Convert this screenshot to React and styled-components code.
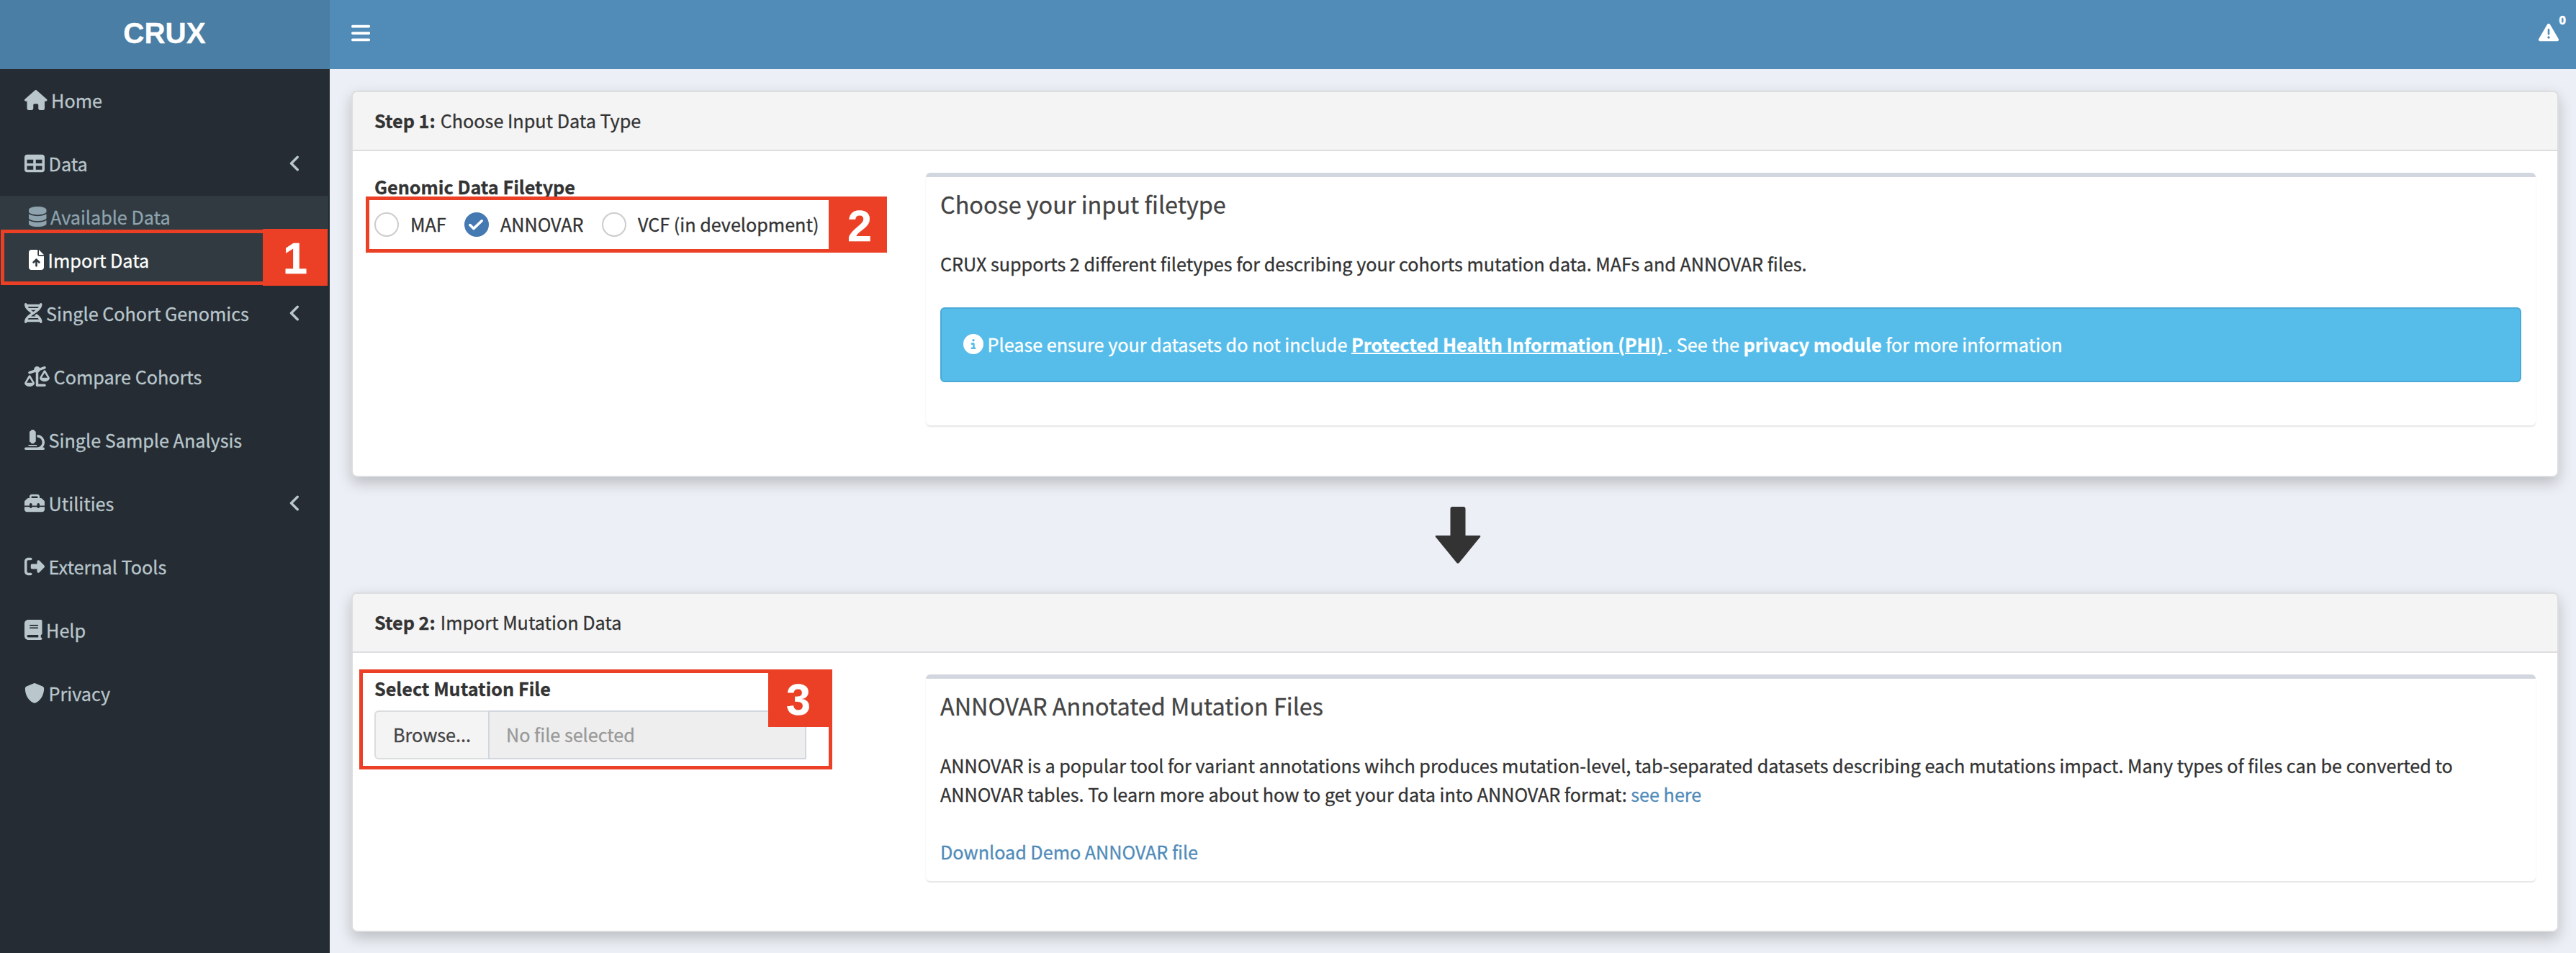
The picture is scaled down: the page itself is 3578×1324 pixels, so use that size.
import React from "react";
import styled, { createGlobalStyle, css } from "styled-components";
import {
  FaHouse,
  FaTable,
  FaDatabase,
  FaFileArrowUp,
  FaDna,
  FaScaleUnbalanced,
  FaMicroscope,
  FaToolbox,
  FaRightFromBracket,
  FaBook,
  FaShield,
  FaAngleLeft,
  FaBars,
  FaTriangleExclamation,
  FaCircleInfo,
} from "react-icons/fa6";

const GlobalStyle = createGlobalStyle`
  *, *::before, *::after { box-sizing: border-box; }
  body {
    margin: 0;
    background: #eceff5;
    font-family: "Noto Sans CJK JP", "Noto Sans CJK SC", "Open Sans", sans-serif;
    font-size: 25.2px;
    line-height: 40px;
    letter-spacing: -0.01px;
    -webkit-text-stroke: 0.3px currentColor;
    color: #333;
  }
`;

const Shell = styled.div`
  display: grid;
  grid-template-columns: 458px 1fr;
  grid-template-rows: 96px 1228px;
  height: 1324px;
  overflow: hidden;
`;

const Brand = styled.div`
  padding-right: 1px;
  background: #4a7ea5;
  color: #fff;
  font: 700 40.4px/92px "Liberation Sans", Arial, sans-serif;
  text-align: center;
`;

const Navbar = styled.header`
  display: flex;
  justify-content: space-between;
  background: #518bb8;
  color: #fff;
  padding: 31px 14px 0 29.5px;
`;

const Alerts = styled.div`
  position: relative;
  width: 38px;
`;

const AlertCount = styled.span`
  position: absolute;
  top: -13px;
  right: 0;
  font-size: 16.2px;
  line-height: 18px;
  font-weight: 900;
`;

const Sidebar = styled.nav`
  background: #252c33;
  color: #b9c6cc;
`;

const Glyph = styled.span`
  display: flex;
  flex: none;
  svg {
    display: block;
    width: ${(p) => p.$w || 28}px;
    height: ${(p) => p.$h || 28}px;
  }
`;

const Item = styled.a`
  display: flex;
  height: 88px;
  padding: 29px 40px 0 34px;
  gap: 5.6px;
`;

const ItemLabel = styled.span`
  flex: 1;
  margin-top: -6px;
  white-space: nowrap;
`;

const SubMenu = styled.div`
  position: relative;
  width: 456px;
  height: 120px;
  padding: 15px 0 0 40px;
  background: #303a40;
`;

const SubItem = styled.a`
  display: flex;
  height: 60px;
  gap: 5.6px;
  color: ${(p) => (p.$active ? "#fff" : "#8fa3ae")};
`;

const Main = styled.main`
  padding: 30px 24px 0 30px;
`;

const Card = styled.section`
  height: ${(p) => p.$h}px;
  border: 2px solid #dcdddf;
  border-radius: 8px;
  background: #fff;
  box-shadow: 0 8px 20px rgba(0, 0, 0, 0.21);
`;

const CardHeader = styled.div`
  height: 82px;
  padding: 19px 30px 0;
  border-bottom: 2px solid #dcdddf;
  border-radius: 6px 6px 0 0;
  background: #f4f4f4;
  b {
    margin-right: 1.5px;
  }
`;

const CardBody = styled.div`
  display: grid;
  grid-template-columns: 766px 1fr;
  padding: 30px;
`;

const Field = styled.div`
  position: relative;
`;

const Label = styled.div`
  margin-top: -1px;
  font-weight: 700;
`;

const Radios = styled.div`
  display: flex;
  padding-top: 16px;
`;

const Radio = styled.label`
  display: flex;
  gap: 16px;
  width: ${(p) => p.$w}px;
  white-space: nowrap;
  > span:last-child {
    margin-top: -4px;
  }
`;

const Dot = styled.span`
  flex: none;
  width: 34px;
  height: 34px;
  border-radius: 50%;
  border: 2px solid #ccc;
  ${(p) =>
    p.$on &&
    css`
      border-color: #4579b2;
      background: #4579b2;
    `}
  svg {
    display: block;
    width: 30px;
    height: 30px;
  }
`;

const FilePicker = styled.div`
  display: flex;
  width: 600px;
  height: 68px;
  margin-top: 11px;
`;

const Browse = styled.button`
  width: 158px;
  padding: 0 0 2px;
  font: inherit;
  letter-spacing: inherit;
  color: #444;
  background: #f4f4f4;
  border: 2px solid #dcdddf;
  border-right: 0;
  border-radius: 6px 0 0 6px;
`;

const FileName = styled.div`
  flex: 1;
  padding: 11px 23px 0;
  color: #999;
  background: #eee;
  border: 2px solid #d2d6de;
`;

const InfoBox = styled.article`
  height: ${(p) => p.$h}px;
  padding: 20px 20px 0;
  border-top: 6px solid #d2d6de;
  border-radius: 6px;
  box-shadow: 0 2px 2px rgba(0, 0, 0, 0.1);
  background: #fff;
`;

const Title = styled.h3`
  margin: -1px 0 0;
  font-size: 32.4px;
  line-height: 36px;
  font-weight: 400;
  color: #444;
`;

const Text = styled.p`
  margin: ${(p) => p.$top || 0}px 0 0;
  letter-spacing: -0.015px;
`;

const Link = styled.a`
  color: #4f8bb9;
`;

const Callout = styled.div`
  display: flex;
  height: 104px;
  margin-top: 41px;
  padding: 35px 30px 0;
  gap: 5.6px;
  color: #fff;
  background: #56bdeb;
  border: 2px solid #4ba9d6;
  border-radius: 6px;
  > span:last-child {
    margin-top: -6px;
  }
`;

const Phi = styled.a`
  font-weight: 700;
  text-decoration: underline;
  text-decoration-thickness: 2px;
  white-space: pre;
`;

const ArrowRow = styled.div`
  display: flex;
  justify-content: center;
  height: 160px;
  padding: 41px 0 0 7px;
`;

const Frame = styled.div`
  position: absolute;
  left: ${(p) => p.$x}px;
  top: ${(p) => p.$y}px;
  width: ${(p) => p.$w}px;
  height: ${(p) => p.$h}px;
  border: 5px solid #eb4026;
`;

const Tag = styled.div`
  position: absolute;
  left: ${(p) => p.$x}px;
  top: ${(p) => p.$y}px;
  width: ${(p) => p.$w}px;
  height: ${(p) => p.$h}px;
  padding-right: ${(p) => p.$shift || 0}px;
  background: #eb4026;
  color: #fff;
  font: 700 61px/${(p) => p.$line || 82}px "Liberation Sans", Arial, sans-serif;
  text-align: center;
`;

const NavItem = ({ icon: Icon, w, label, open }) => (
  <Item>
    <Glyph $w={w}><Icon /></Glyph>
    <ItemLabel>{label}</ItemLabel>
    {open && <Glyph $w={17.5}><FaAngleLeft /></Glyph>}
  </Item>
);

export default function App() {
  return (
    <>
      <GlobalStyle />
      <Shell>
        <Brand>CRUX</Brand>
        <Navbar>
          <Glyph $w={26.25} $h={30}><FaBars /></Glyph>
          <Alerts>
            <Glyph><FaTriangleExclamation /></Glyph>
            <AlertCount>0</AlertCount>
          </Alerts>
        </Navbar>
        <Sidebar>
          <NavItem icon={FaHouse} w={31.5} label="Home" />
          <NavItem icon={FaTable} label="Data" open />
          <SubMenu>
            <SubItem>
              <Glyph $w={24.5}><FaDatabase /></Glyph>
              <ItemLabel>Available Data</ItemLabel>
            </SubItem>
            <SubItem $active>
              <Glyph $w={21}><FaFileArrowUp /></Glyph>
              <ItemLabel>Import Data</ItemLabel>
            </SubItem>
            <Frame $x={1} $y={47} $w={454} $h={77} />
            <Tag $x={365} $y={46} $w={90} $h={79}>1</Tag>
          </SubMenu>
          <NavItem icon={FaDna} w={24.5} label="Single Cohort Genomics" open />
          <NavItem icon={FaScaleUnbalanced} w={35} label="Compare Cohorts" />
          <NavItem icon={FaMicroscope} label="Single Sample Analysis" />
          <NavItem icon={FaToolbox} label="Utilities" open />
          <NavItem icon={FaRightFromBracket} label="External Tools" />
          <NavItem icon={FaBook} w={24.5} label="Help" />
          <NavItem icon={FaShield} label="Privacy" />
        </Sidebar>
        <Main>
          <Card $h={537}>
            <CardHeader><b>Step 1:</b> Choose Input Data Type</CardHeader>
            <CardBody>
              <Field>
                <Label>Genomic Data Filetype</Label>
                <Radios>
                  <Radio $w={125}><Dot /><span>MAF</span></Radio>
                  <Radio $w={191}>
                    <Dot $on>
                      <svg viewBox="0 0 30 30">
                        <path
                          d="M5.8 15.6 L10.8 20.6 L22.2 9.8"
                          fill="none"
                          stroke="#fff"
                          strokeWidth="3.6"
                          strokeLinecap="round"
                          strokeLinejoin="round"
                        />
                      </svg>
                    </Dot>
                    <span>ANNOVAR</span>
                  </Radio>
                  <Radio $w={310}><Dot /><span>VCF (in development)</span></Radio>
                </Radios>
                <Frame $x={-12} $y={33} $w={648} $h={78} />
                <Tag $x={636} $y={33} $w={76} $h={78}>2</Tag>
              </Field>
              <InfoBox $h={351}>
                <Title>Choose your input filetype</Title>
                <Text $top={45}>CRUX supports 2 different filetypes for describing your cohorts mutation data. MAFs and ANNOVAR files.</Text>
                <Callout>
                  <Glyph><FaCircleInfo /></Glyph>
                  <span>
                    Please ensure your datasets do not include <Phi>{"Protected Health Information (PHI) "}</Phi>. See the <b>privacy module</b> for more information
                  </span>
                </Callout>
              </InfoBox>
            </CardBody>
          </Card>
          <ArrowRow>
            <svg width="64" height="80" viewBox="0 0 64 80">
              <path d="M24.5 0h15q3 0 3 3v37h19.500q2 0 1 2L34 77.500q-2 2.500-4 0L1 42q-1-2 1-2h19.500V3q0-3 3-3z" fill="#333" />
            </svg>
          </ArrowRow>
          <Card $h={472}>
            <CardHeader><b>Step 2:</b> Import Mutation Data</CardHeader>
            <CardBody>
              <Field>
                <Label>Select Mutation File</Label>
                <FilePicker>
                  <Browse>Browse...</Browse>
                  <FileName>No file selected</FileName>
                </FilePicker>
                <Frame $x={-21} $y={-7} $w={657} $h={139} />
                <Tag $x={547} $y={-7} $w={89} $h={80} $shift={5} $line={84}>3</Tag>
              </Field>
              <InfoBox $h={287}>
                <Title>ANNOVAR Annotated Mutation Files</Title>
                <Text $top={45}>
                  ANNOVAR is a popular tool for variant annotations wihch produces mutation-level, tab-separated datasets describing each mutations impact. Many types of files can be converted to ANNOVAR tables. To learn more about how to get your data into ANNOVAR format: <Link>see here</Link>
                </Text>
                <Text $top={40}><Link>Download Demo ANNOVAR file</Link></Text>
              </InfoBox>
            </CardBody>
          </Card>
        </Main>
      </Shell>
    </>
  );
}
